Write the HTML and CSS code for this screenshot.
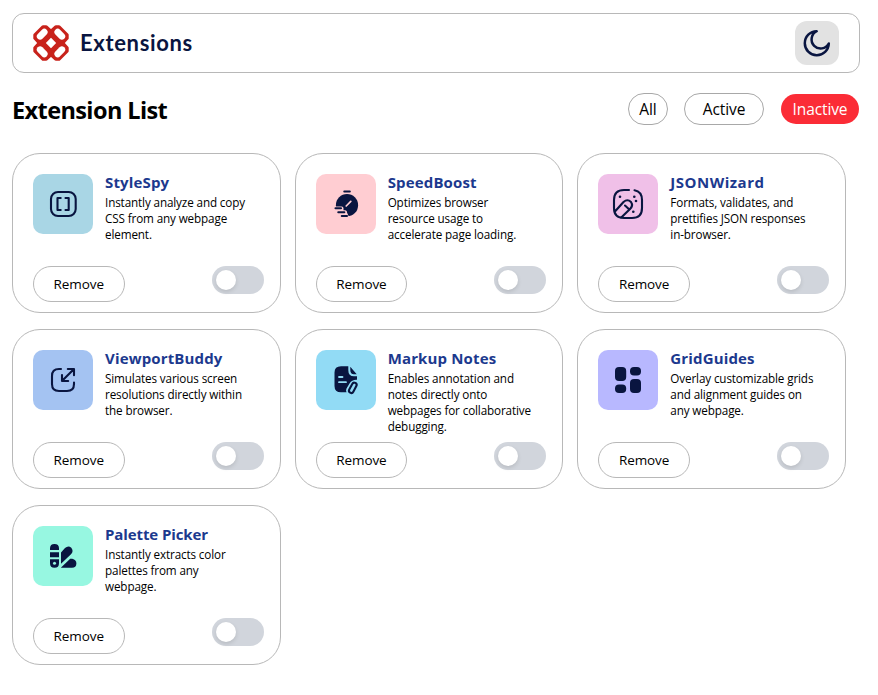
FILE: index.html
```html
<!DOCTYPE html>
<html lang="en">
<head>
<meta charset="utf-8">
<title>Extensions</title>
<link rel="stylesheet" href="styles.css">
</head>
<body>
<header class="topbar">
  <div class="brand">
    <svg class="logo" viewBox="-18 -18 36 36" stroke-linejoin="round" stroke-linecap="round">
      <defs><g id="petal"><path fill="#c8221b" stroke="#c8221b" stroke-width="3.4" d="M-8-16H-4.8L-1-12.4V-6.6L-6.6-1H-12.4L-16-4.8V-8Z"/><path stroke="#fff" stroke-width="6.6" d="M-10.9-6.7L-6.7-10.9"/></g></defs>
      <use href="#petal"/><use href="#petal" transform="rotate(90)"/><use href="#petal" transform="rotate(180)"/><use href="#petal" transform="rotate(270)"/>
    </svg>
    <span class="brand-name">Extensions</span>
  </div>
  <button class="theme" aria-label="Theme"><svg viewBox="0 0 44 44" fill="none" stroke="#091540" stroke-width="2.5" stroke-linejoin="round"><path d="M21.7 10.2A12 12 0 1 0 33.8 22.5A9.1 9.1 0 1 1 21.7 10.2Z"/></svg></button>
</header>
<section class="bar">
  <h1>Extension List</h1>
  <nav class="filters">
    <button class="filter all">All</button>
    <button class="filter active">Active</button>
    <button class="filter inactive">Inactive</button>
  </nav>
</section>
<main class="grid">
  <article class="card">
    <div class="info">
      <svg class="icon sky" viewBox="0 0 60 60"><g class="line"><rect x="18" y="18" width="24.7" height="24" rx="7"/><path d="M27.7 24H24.5V36H27.7M32.5 24H35.7V36H32.5"/></g></svg>
      <div><h2>StyleSpy</h2><p>Instantly analyze and copy<br>CSS from any webpage<br>element.</p></div>
    </div>
    <div class="actions"><button class="remove">Remove</button><span class="toggle"></span></div>
  </article>
  <article class="card">
    <div class="info">
      <svg class="icon rose" viewBox="0 0 60 60"><circle class="solid" cx="31" cy="31.2" r="11.1"/><path fill="#ffcdd2" d="M18 32.5H25.7Q27.5 32.5 27.5 34.3V36.3H29.3Q31.2 36.5 31.2 39L33.5 44H18Z"/><path stroke="#ffcdd2" stroke-width="1.7" stroke-linecap="round" d="M30.2 32L34.8 27.4"/><path class="line" d="M28.3 17.5H33.8M19.5 34.3H25M22.3 38.2H28.3M25.8 42H31"/></svg>
      <div><h2>SpeedBoost</h2><p>Optimizes browser<br>resource usage to<br>accelerate page loading.</p></div>
    </div>
    <div class="actions"><button class="remove">Remove</button><span class="toggle"></span></div>
  </article>
  <article class="card">
    <div class="info">
      <svg class="icon pink" viewBox="0 0 60 60"><path class="line" d="M31 16H26Q16 16 16 26V34Q16 44 26 44H34Q44 44 44 34V26Q44 17.5 36.5 16.2M16.5 38L25.5 28Q29.5 24.5 33 28Q35.5 31.5 32 35L23 43.8M27 31.5L30.8 35"/><g class="solid"><circle cx="22" cy="22.7" r="1.3"/><circle cx="36.3" cy="22.7" r="1.3"/><circle cx="38" cy="27" r="1.3"/><circle cx="35.3" cy="37.7" r="1.3"/></g></svg>
      <div><h2 class="wide">JSONWizard</h2><p>Formats, validates, and<br>prettifies JSON responses<br>in-browser.</p></div>
    </div>
    <div class="actions"><button class="remove">Remove</button><span class="toggle"></span></div>
  </article>
  <article class="card">
    <div class="info">
      <svg class="icon blue" viewBox="0 0 60 60"><path class="line" d="M28 19H26Q19 19 19 26V34Q19 41 26 41H34Q41 41 41 34V32.5M40.5 19.5L29.2 30.8M34.8 19H41V25.2M29 25V31H35.2"/></svg>
      <div><h2>ViewportBuddy</h2><p>Simulates various screen<br>resolutions directly within<br>the browser.</p></div>
    </div>
    <div class="actions"><button class="remove">Remove</button><span class="toggle"></span></div>
  </article>
  <article class="card">
    <div class="info">
      <svg class="icon cyan" viewBox="0 0 60 60"><path class="solid" d="M25 16.2H32.3V20Q32.3 26.3 38 26.3H41V29.8Q36 29.5 33.5 33.5L30.5 38.5Q29.5 40.5 30.5 42.3H25Q18.5 42.3 18.5 36V22.5Q18.5 16.2 25 16.2ZM34.3 16.8L40.7 24.2H38Q34.3 24.2 34.3 20Z"/><path stroke="#92dbf5" stroke-width="1.8" stroke-linecap="round" d="M23 27H26.5M23 32.2H30"/><rect class="line" x="34.5" y="32.3" width="4.6" height="11" rx="2.3" transform="rotate(28 36.8 37.8)"/></svg>
      <div><h2>Markup Notes</h2><p>Enables annotation and<br>notes directly onto<br>webpages for collaborative<br>debugging.</p></div>
    </div>
    <div class="actions"><button class="remove">Remove</button><span class="toggle"></span></div>
  </article>
  <article class="card">
    <div class="info">
      <svg class="icon violet" viewBox="0 0 60 60"><g class="solid"><rect x="17" y="17" width="11.2" height="14" rx="4"/><rect x="32" y="17" width="11" height="8.4" rx="4"/><rect x="17" y="34.6" width="11.2" height="8.4" rx="4"/><rect x="32" y="29" width="11" height="14" rx="4"/></g></svg>
      <div><h2>GridGuides</h2><p>Overlay customizable grids<br>and alignment guides on<br>any webpage.</p></div>
    </div>
    <div class="actions"><button class="remove">Remove</button><span class="toggle"></span></div>
  </article>
  <article class="card">
    <div class="info">
      <svg class="icon mint" viewBox="0 0 60 60"><path class="solid" d="M17 24V22.3Q17 18 21.5 18T26 22.3V24ZM17 26.2H26V31.3H17ZM17 33.3H26V37.3Q26 41.8 21.5 41.8T17 37.3ZM28 37.7V26.5L32 22Q35.3 19 38.3 21.7Q41 25 38 28.2ZM27.8 41.8L37.2 32.8H39.3Q43.4 33.8 43.4 37.4Q43.2 41.8 39 41.8Z"/><circle cx="21.5" cy="37.3" r="1.5" fill="#97f7e1"/></svg>
      <div><h2 class="narrow">Palette Picker</h2><p>Instantly extracts color<br>palettes from any<br>webpage.</p></div>
    </div>
    <div class="actions"><button class="remove">Remove</button><span class="toggle"></span></div>
  </article>
</main>
</body>
</html>
```
FILE: styles.css
```css
* { box-sizing: border-box; }
body {
  margin: 0;
  padding: 13px 18px 0 12px;
  background: #fff;
  color: #000;
  font-family: "Open Sans", "Noto Sans", sans-serif;
}
h1, h2, p { margin: 0; }
button { font: inherit; color: inherit; background: #fff; padding: 0; }
.topbar {
  display: flex;
  align-items: center;
  justify-content: space-between;
  height: 60px;
  padding: 0 20px;
  border: 1px solid #b8b8b8;
  border-radius: 12px;
}
.brand { display: flex; align-items: center; gap: 11px; }
.logo { width: 36px; height: 36px; overflow: visible; }
.brand-name { font: 700 22px/30px Lato, sans-serif; color: #091540; letter-spacing: 0.65px; }
.theme { width: 44px; height: 44px; border: 0; border-radius: 12px; background: #e2e2e2; }
.theme svg { display: block; }
.bar {
  display: flex;
  align-items: center;
  justify-content: space-between;
  height: 32px;
  margin: 20px 1px 28px 0;
}
h1 { font-size: 23.5px; line-height: 32px; font-weight: 700; letter-spacing: -0.6px; padding-top: 2px; }
.filters { display: flex; align-items: center; }
.filter {
  height: 32px;
  border: 1px solid #a8a8a8;
  border-radius: 16px;
  font-size: 15.5px;
  line-height: 31px;
  letter-spacing: -0.1px;
}
.all { width: 40px; margin-right: 16px; }
.active { width: 80px; margin-right: 17px; }
.inactive { width: 78px; height: 30px; border: 0; background: #fb2c36; color: #fff; }
.grid {
  display: grid;
  grid-template-columns: repeat(3, 1fr);
  gap: 16px 14px;
  width: 834px;
}
.card {
  display: flex;
  flex-direction: column;
  justify-content: space-between;
  height: 160px;
  padding: 20px 16px 10px 20px;
  border: 1px solid #b8b8b8;
  border-radius: 28px;
}
.info { display: flex; gap: 12px; height: 80px; }
.icon { flex: none; width: 60px; height: 60px; border-radius: 10px; }
.line { fill: none; stroke: #091540; stroke-width: 2.1; stroke-linecap: round; stroke-linejoin: round; }
.solid { fill: #091540; }
.sky { background: #a9d6e5; }
.rose { background: #ffcdd2; }
.pink { background: #f0c0e8; }
.blue { background: #a4c3f2; }
.cyan { background: #92dbf5; }
.violet { background: #b8b8ff; }
.mint { background: #97f7e1; }
h2 { font-size: 15px; line-height: 20px; font-weight: 700; color: #1c398e; letter-spacing: 0.15px; margin-top: -2px; }
.wide { letter-spacing: 0.5px; }
.narrow { letter-spacing: -0.1px; }
p { font-size: 11.7px; line-height: 16px; letter-spacing: -0.13px; white-space: nowrap; margin-top: 2px; }
.actions { display: flex; justify-content: space-between; align-items: flex-start; }
.remove {
  width: 91.5px;
  height: 36px;
  border: 1px solid #b8b8b8;
  border-radius: 18px;
  font-size: 13.5px;
  line-height: 34px;
  letter-spacing: -0.1px;
}
.toggle { width: 52px; height: 28px; padding: 4px; border-radius: 14px; background: #d1d5dc; }
.toggle::before {
  content: "";
  display: block;
  width: 20px;
  height: 20px;
  border-radius: 50%;
  background: #fff;
  box-shadow: 0 2px 4px rgba(0, 0, 0, 0.12);
}
```
